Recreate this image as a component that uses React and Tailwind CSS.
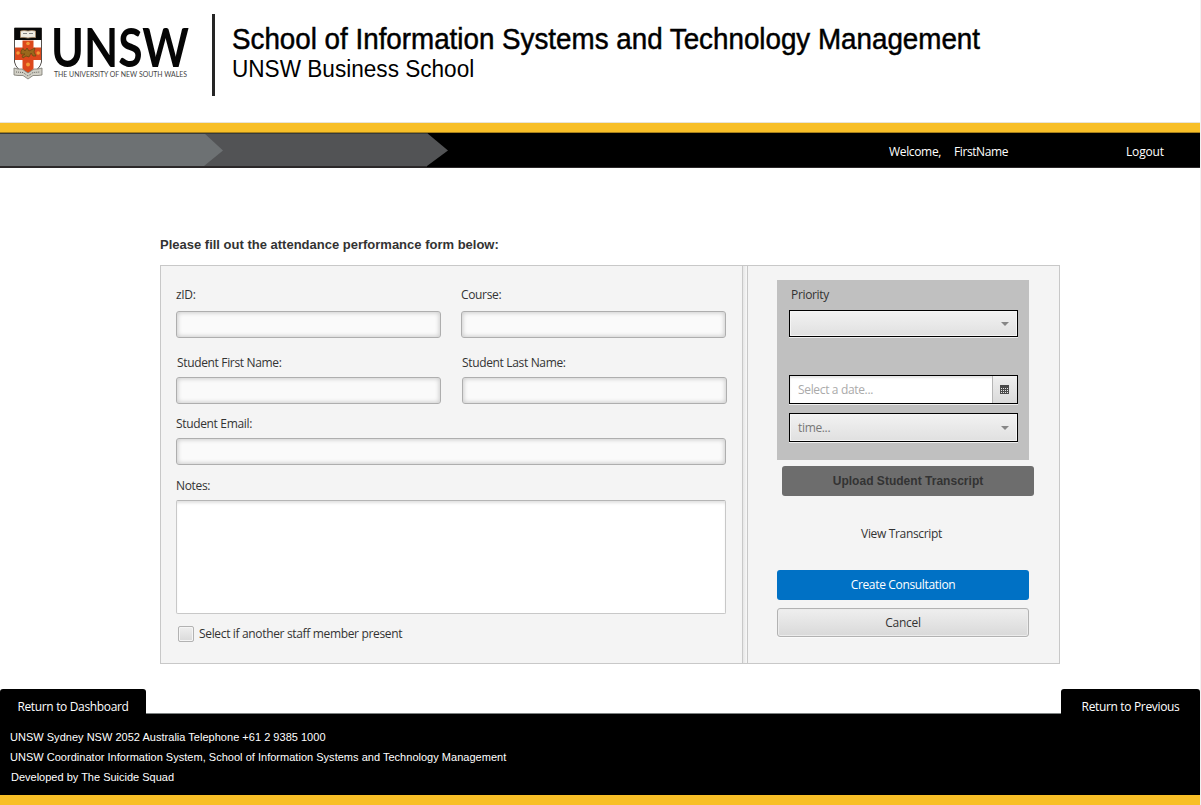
import React from 'react';

const inputClass =
  'block h-[27px] rounded-[3px] border border-[#aeaeae] bg-[#fafafa] shadow-[inset_0_0_4px_1px_rgba(0,0,0,0.18)] outline-none';
const labelClass = 'block h-[18px] whitespace-nowrap text-[12px] leading-[18px]';

function Crest() {
  return (
    <svg className="block" width="30" height="54" viewBox="0 0 30 54" aria-hidden="true">
      <path d="M1.500 1H28.500V35Q27 43 15 48Q3 43 1.500 35Z" fill="#fff" stroke="#55504c" />
      <path d="M1.500 1H28.500V13H1.500Z" fill="#080808" />
      <path d="M7.500 4Q11 3 15 4Q19 3 22.500 4V10.500Q19 10 15 11Q11 10 7.500 10.500Z" fill="#f0ebe2" stroke="#a98a68" strokeWidth=".8" />
      <path d="M10 6.500H14M16 6.500H20" stroke="#777" strokeWidth=".9" />
      <path d="M9.500 13.500H20.500V20.500H28V33H20.500V42L15 46.500L9.500 42V33H2V20.500H9.500Z" fill="#dc481c" />
      <g fill="#f29a39">
        <circle cx="15" cy="16.500" r="1.800" />
        <circle cx="5" cy="26" r="1.800" />
        <circle cx="25.200" cy="26" r="1.800" />
        <circle cx="15" cy="37.500" r="2" />
      </g>
      <path d="M8 24L10 21.500L12 24L14 21L16 24L20 22L22 21L21 25L23 29L20 29L18 26L16 30L13 29L10 31L9 29L12 27L8 27Z" fill="#9a681c" stroke="#624713" strokeWidth=".7" />
      <path d="M1 41L5 42L9 42L15 46L21 42L25 42L29 41V48L25 48.500L20 48.500L15 52L10 48.500L5 48.500L1 48Z" fill="#d2d0c6" stroke="#77766f" strokeWidth=".8" />
      <path d="M3 45L10 45.500L15 49L20 45.500L27 45" fill="none" stroke="#66655f" strokeWidth="1" strokeDasharray="1 1" />
    </svg>
  );
}

function Logo() {
  return (
    <div className="flex pl-[13px] pt-[27px]">
      <Crest />
      <svg className="-mt-[16px] block" width="156" height="80" viewBox="0 0 156 80">
        <text x="8" y="55.500" fontFamily="Lato, sans-serif" fontSize="53" fontWeight="700" textLength="138" lengthAdjust="spacingAndGlyphs" fill="#050505">UNSW</text>
        <text x="11" y="65.500" fontFamily="Lato, sans-serif" fontSize="7.800" textLength="133" lengthAdjust="spacingAndGlyphs" fill="#444">THE UNIVERSITY OF NEW SOUTH WALES</text>
      </svg>
    </div>
  );
}

function Header() {
  return (
    <header className="flex h-[122px] font-['Liberation_Sans',sans-serif] tracking-normal text-black">
      <div className="w-[212px]"><Logo /></div>
      <div className="mt-[14px] h-[82px] w-[3px] bg-[#252525]" />
      <div className="ml-[17px] pt-[22px]">
        <h1 className="h-[34px] w-max origin-left scale-x-[0.9255] whitespace-nowrap text-[30px] leading-[34px] [-webkit-text-stroke:0.5px_black]">School of Information Systems and Technology Management</h1>
        <p className="-mt-px h-[28px] w-max origin-left scale-x-[0.982] whitespace-nowrap text-[23px] leading-[28px]">UNSW Business School</p>
      </div>
    </header>
  );
}

function NavBar() {
  return (
    <nav className="flex h-[35px] border-b border-[#2b2829] bg-black text-[12px] text-white">
      <svg className="block shrink-0" width="450" height="34" viewBox="0 0 450 34" aria-hidden="true">
        <path d="M0 0H427L448 17.500L427 33H0Z" fill="#525355" />
        <path d="M0 0H204L223 17.500L204 33H0Z" fill="#6d7173" />
        <path d="M0 .5H427" stroke="#353a3a" />
        <path d="M0 33.500H427" stroke="#2b2829" />
      </svg>
      <span className="ml-[439px] mt-[10px] w-[65px] whitespace-nowrap leading-[18px]">Welcome,</span>
      <span className="mt-[10px] w-[172px] whitespace-nowrap leading-[18px] tracking-[-0.4px]">FirstName</span>
      <a className="mt-[10px] whitespace-nowrap leading-[18px] tracking-[-0.15px]">Logout</a>
    </nav>
  );
}

function Field({ label, id, className, labelOffset = '' }) {
  return (
    <div>
      <label htmlFor={id} className={`${labelClass} ${labelOffset}`}>{label}</label>
      <input id={id} className={`${inputClass} ${className}`} />
    </div>
  );
}

function StudentDetails() {
  return (
    <section className="w-[581px] pl-[15px] pt-[20px]">
      <div className="flex gap-[20px]">
        <Field id="zid" label="zID:" className="mt-[7px] w-[265px]" />
        <Field id="course" label="Course:" className="mt-[7px] w-[265px]" />
      </div>
      <div className="mt-[16px] flex gap-[21px]">
        <Field id="first" label="Student First Name:" className="mt-[5px] w-[265px]" labelOffset="pl-px" />
        <Field id="last" label="Student Last Name:" className="mt-[5px] w-[265px]" />
      </div>
      <div className="mt-[11px]">
        <Field id="email" label="Student Email:" className="mt-[5px] w-[550px]" />
      </div>
      <label htmlFor="notes" className={`${labelClass} mt-[12px]`}>Notes:</label>
      <textarea id="notes" className="mt-[5px] block h-[114px] w-[550px] resize-none rounded-[2px] border border-[#c8c8c8] border-t-[#b5b5b5] bg-white shadow-[inset_0_3px_3px_-1px_rgba(0,0,0,0.12)] outline-none" />
      <label className="mt-[11px] flex h-[18px] items-center pl-[2px]">
        <span className="h-4 w-4 rounded-[2px] border border-[#b2b2b2] bg-linear-to-b from-[#efefef] to-[#dadada] shadow-[inset_0_0_0_1px_#f5f5f5]" />
        <span className="ml-[5px] whitespace-nowrap text-[12px] leading-[18px]">Select if another staff member present</span>
      </label>
    </section>
  );
}

function Arrow() {
  return (
    <svg className="mr-[8px] block" width="8" height="4" viewBox="0 0 8 4" aria-hidden="true">
      <path d="M0 0H8L4 4Z" fill="#868686" />
    </svg>
  );
}

function CalendarIcon() {
  return (
    <svg className="block" width="9" height="9" viewBox="0 0 9 9" shapeRendering="crispEdges" aria-hidden="true">
      <path d="M0 0H9V9H0Z" fill="#4a4a4a" />
      <path d="M1 3.500H8M1 5.500H8M1 7.500H8" stroke="#e5e5e5" strokeDasharray="1 1" />
    </svg>
  );
}

function ScheduleActions() {
  return (
    <section className="w-[311px] pl-[29px] pt-[14px]">
      <div className="h-[180px] w-[252px] bg-[#c0c0c0] pl-[12px] pt-[6px]">
        <div className={`${labelClass} pl-[2px]`}>Priority</div>
        <div className="mt-[6px] flex h-[27px] w-[229px] items-center justify-end border border-black bg-linear-to-b from-[#f2f2f2] to-[#e0e0e0] shadow-[inset_0_0_0_1px_#f5f5f5,0_1px_0_#eeeeee]"><Arrow /></div>
        <div className="mt-[38px] flex h-[29px] w-[229px] border border-black bg-white shadow-[inset_0_2px_2px_rgba(0,0,0,0.1),0_1px_0_#eeeeee]">
          <span className="w-[202px] whitespace-nowrap pl-[8px] text-[12px] leading-[27px] text-[#aaa]">Select a date...</span>
          <span className="flex flex-1 items-center justify-center border-l border-[#b5b5b5] bg-linear-to-b from-[#efefef] to-[#dadada] pr-px"><CalendarIcon /></span>
        </div>
        <div className="mt-[9px] flex h-[29px] w-[229px] items-center justify-between border border-black bg-linear-to-b from-[#f2f2f2] to-[#e0e0e0] pl-[8px] text-[12px] leading-[18px] text-[#777] shadow-[inset_0_0_0_1px_#f5f5f5,0_1px_0_#eeeeee]"><span>time...</span><Arrow /></div>
      </div>
      <button className="ml-[5px] mt-[6px] block h-[30px] w-[252px] rounded-[3px] bg-[#6d6d6d] font-['Liberation_Sans',sans-serif] text-[12px] font-bold tracking-[0.02px] text-[#333]">Upload Student Transcript</button>
      <div className="mt-[29px] h-[18px] w-[249px] text-center text-[12px] leading-[18px]">View Transcript</div>
      <button className="mt-[27px] block h-[30px] w-[252px] rounded-[3px] bg-[#0071c5] text-[12px] text-white">Create Consultation</button>
      <button className="mt-[8px] block h-[29px] w-[252px] rounded-[3px] border border-[#b2b2b2] bg-linear-to-b from-[#efefef] to-[#d9d9d9] pt-px text-[12px] tracking-[-0.3px] shadow-[inset_0_0_0_1px_#ececec,0_1px_0_#fafafa]">Cancel</button>
    </section>
  );
}

function Footer() {
  return (
    <footer className="text-white">
      <div className="flex h-[25px] items-end justify-between border-b border-[#7c8181] text-[12px]">
        <a className="-mb-px block h-[25px] w-[146px] rounded-t-[3px] bg-black pt-[9px] text-center leading-[18px]">Return to Dashboard</a>
        <a className="-mb-px block h-[25px] w-[139px] rounded-t-[3px] bg-black pt-[9px] text-center leading-[18px]">Return to Previous</a>
      </div>
      <div className="h-[81px] bg-black pl-[10px] pt-[13px] font-['Liberation_Sans',sans-serif] text-[11px] leading-[20px] tracking-[0.02px]">
        <p>UNSW Sydney NSW 2052 Australia Telephone +61 2 9385 1000</p>
        <p>UNSW Coordinator Information System, School of Information Systems and Technology Management</p>
        <p className="pl-px tracking-normal">Developed by The Suicide Squad</p>
      </div>
      <div className="h-[10px] bg-[#f8bf27]" />
    </footer>
  );
}

export default function App() {
  return (
    <div className="h-[805px] w-[1201px] overflow-hidden border-r border-[#f2f2f2] bg-white font-['Open_Sans','Noto_Sans',sans-serif] tracking-[-0.34px] text-[#333]">
      <Header />
      <div className="h-[11px] border-b border-t border-b-[#a57f1b] border-t-[#e8e4d8] bg-[#f8bf27]" />
      <NavBar />
      <main className="h-[521px] pl-[160px] pt-[68px]">
        <h2 className="h-[18px] whitespace-nowrap font-['Liberation_Sans',sans-serif] text-[13px] font-bold leading-[18px] tracking-normal">Please fill out the attendance performance form below:</h2>
        <form className="mt-[11px] flex h-[399px] w-[900px] border border-[#c8c8c8] bg-[#f4f4f4]">
          <StudentDetails />
          <div className="w-[6px] border-x border-[#c8c8c8] bg-linear-to-r from-[#e6e6e6] to-[#f8f8f8]" />
          <ScheduleActions />
        </form>
      </main>
      <Footer />
    </div>
  );
}
